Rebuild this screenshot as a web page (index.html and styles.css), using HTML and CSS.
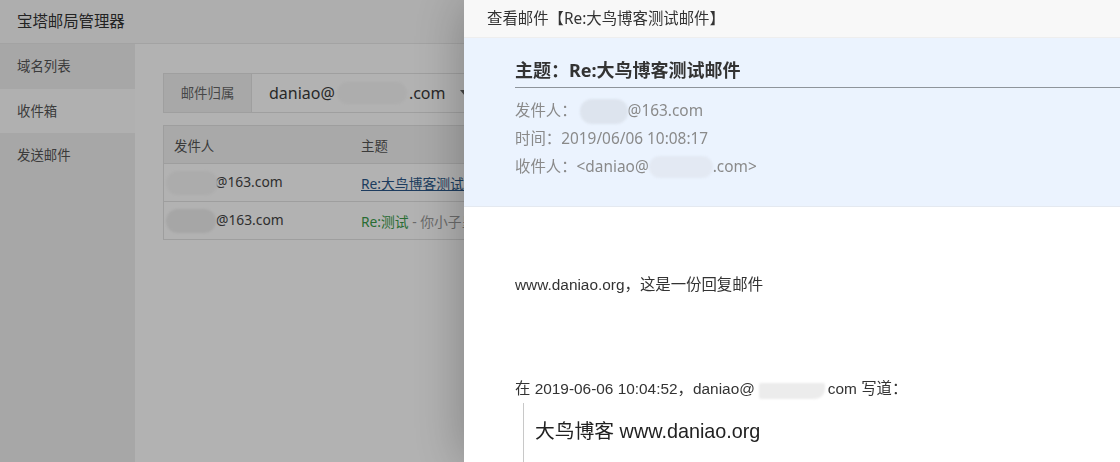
FILE: index.html
```html
<!DOCTYPE html>
<html lang="zh-CN">
<head>
<meta charset="utf-8">
<title>宝塔邮局管理器</title>
<link rel="stylesheet" href="styles.css">
</head>
<body>
<div class="app">
  <header class="topbar">宝塔邮局管理器</header>
  <div class="layout">
    <nav class="side">
      <a class="nav-item">域名列表</a>
      <a class="nav-item active">收件箱</a>
      <a class="nav-item">发送邮件</a>
    </nav>
    <main class="main">
      <div class="form-row">
        <label class="form-label">邮件归属</label>
        <div class="select">daniao@<span class="blob blob-sel"></span>.com<i class="caret"></i></div>
      </div>
      <table class="mail-table">
        <thead>
          <tr><th class="col-from">发件人</th><th>主题</th></tr>
        </thead>
        <tbody>
          <tr>
            <td class="col-from"><span class="blob blob-row"></span>@163.com</td>
            <td><a class="subj-link">Re:大鸟博客测试邮件</a></td>
          </tr>
          <tr>
            <td class="col-from"><span class="blob blob-row2"></span>@163.com</td>
            <td><span class="subj-new">Re:测试</span><span class="subj-preview"> - 你小子呈现</span></td>
          </tr>
        </tbody>
      </table>
    </main>
  </div>
</div>
<div class="shade"></div>
<aside class="viewer">
  <div class="viewer-title">查看邮件【Re:大鸟博客测试邮件】</div>
  <section class="mail-head">
    <h2 class="mail-subject">主题：Re:大鸟博客测试邮件</h2>
    <div class="mail-meta">
      <div class="meta-line">发件人：<span class="blob blob-from"></span>@163.com</div>
      <div class="meta-line">时间：2019/06/06 10:08:17</div>
      <div class="meta-line">收件人：&lt;daniao@<span class="blob blob-to"></span>.com&gt;</div>
    </div>
  </section>
  <section class="mail-body">
    <div class="body-line">www.daniao.org，这是一份回复邮件</div>
    <div class="quote-head">在 2019-06-06 10:04:52，daniao@<span class="blob blob-quote"></span>com 写道：</div>
    <blockquote class="quote">大鸟博客 www.daniao.org</blockquote>
  </section>
</aside>
</body>
</html>
```

FILE: styles.css
```css
html, body {
  margin: 0;
  padding: 0;
  height: 100%;
  overflow: hidden;
}

body {
  font-family: "Noto Sans", "Noto Sans CJK SC", sans-serif;
  color: #333;
  background: #fff;
}

.app {
  display: flex;
  flex-direction: column;
  height: 100vh;
}

.topbar {
  height: 44px;
  line-height: 44px;
  padding-left: 17px;
  font-size: 15.4px;
  color: #333;
  background: #fafafa;
  border-bottom: 1px solid #eaeaea;
  box-sizing: border-box;
  flex-shrink: 0;
}

.layout {
  flex: 1;
  display: flex;
}

.side {
  width: 135px;
  background: #efefef;
  display: flex;
  flex-direction: column;
}

.nav-item {
  height: 44.5px;
  line-height: 44px;
  padding-left: 17px;
  font-size: 13.4px;
  color: #555;
}

.nav-item.active {
  background: #fdfdfd;
}

.main {
  flex: 1;
  background: #fff;
  padding: 29px 0 0 28px;
}

.form-row {
  display: flex;
  height: 40px;
}

.form-label {
  width: 89px;
  box-sizing: border-box;
  border: 1px solid #e4e4e4;
  background: #f1f1f1;
  font-size: 13.4px;
  color: #666;
  line-height: 38px;
  text-align: center;
}

.select {
  width: 240px;
  box-sizing: border-box;
  border: 1px solid #e4e4e4;
  border-left: 0;
  padding-left: 17px;
  font-size: 16px;
  line-height: 38px;
  color: #3a3a3a;
  display: flex;
  align-items: center;
}

.caret {
  margin-left: 15px;
  width: 0;
  height: 0;
  border-left: 5px solid transparent;
  border-right: 5px solid transparent;
  border-top: 6px solid #666;
}

.blob {
  display: inline-block;
  border-radius: 12px;
  filter: blur(1.2px);
}

.blob-sel {
  width: 70px;
  height: 22px;
  background: #f8f8f8;
  margin: 0 2px 0 2px;
}

.mail-table {
  margin-top: 12px;
  border-collapse: collapse;
  width: 600px;
  border: 1px solid #e2e2e2;
  font-size: 13.8px;
}

.mail-table th,
.mail-table td {
  height: 37px;
  padding: 0 10px;
  text-align: left;
  font-weight: normal;
  border-bottom: 1px solid #e2e2e2;
}

.mail-table th {
  background: #f2f2f2;
  font-size: 13.4px;
  color: #555;
}

.mail-table td {
  color: #444;
}

.mail-table .col-from {
  width: 167px;
}

.mail-table td.col-from {
  padding-left: 2px;
}

.blob-row {
  width: 52px;
  height: 24px;
  background: #f7f7f7;
  vertical-align: middle;
  margin-right: -3px;
}

.blob-row2 {
  width: 50px;
  height: 24px;
  background: #eeeeee;
  vertical-align: middle;
  margin-right: 0;
}

.subj-link {
  color: #2a5788;
  text-decoration: underline;
}

.subj-new {
  color: #3a9c4a;
}

.subj-preview {
  color: #999;
}

.shade {
  position: fixed;
  inset: 0;
  background: rgba(0, 0, 0, 0.3);
}

.viewer {
  position: fixed;
  top: 0;
  right: 0;
  width: 656px;
  height: 100%;
  background: #fff;
  box-shadow: 1px 1px 50px rgba(0, 0, 0, 0.3);
  display: flex;
  flex-direction: column;
  overflow: hidden;
}

.viewer-title {
  flex-shrink: 0;
  height: 37px;
  line-height: 37px;
  padding-left: 23px;
  font-size: 15.4px;
  color: #333;
  background: #f8f8f8;
  border-bottom: 1px solid #eeeeee;
}

.mail-head {
  flex-shrink: 0;
  background: #ebf3fe;
  padding: 18px 0 0 51px;
  height: 169px;
  box-sizing: border-box;
  border-bottom: 1px solid #e4e9f0;
}

.mail-subject {
  margin: 0;
  font-size: 18px;
  font-weight: bold;
  line-height: 28px;
  color: #333;
  padding-bottom: 3px;
  border-bottom: 1px solid #8e949b;
}

.mail-meta {
  margin-top: 9px;
}

.meta-line {
  font-size: 15.4px;
  line-height: 28px;
  color: #8a8a8a;
  display: flex;
  align-items: center;
}

.blob-from {
  width: 48px;
  height: 25px;
  background: #dde4ee;
  margin-left: 3px;
}

.blob-to {
  width: 64px;
  height: 22px;
  background: #e3e9f3;
}

.mail-body {
  flex-shrink: 0;
  padding: 64px 0 0 51px;
  font-family: "Liberation Sans", "Noto Sans CJK SC", sans-serif;
  font-size: 15.4px;
  color: #333;
}

.body-line {
  line-height: 28px;
}

.quote-head {
  margin-top: 76px;
  line-height: 28px;
  display: flex;
  align-items: center;
  white-space: pre;
}

.blob-quote {
  width: 66px;
  height: 16px;
  background: #ececec;
  border-radius: 2px 2px 10px 2px;
  margin: 4px 3px 0 4px;
}

.quote {
  margin: 0 0 0 8px;
  padding: 13px 0 40px 11px;
  border-left: 1px solid #c8c8c8;
  font-size: 19.8px;
  line-height: 30px;
  color: #222;
}
```
